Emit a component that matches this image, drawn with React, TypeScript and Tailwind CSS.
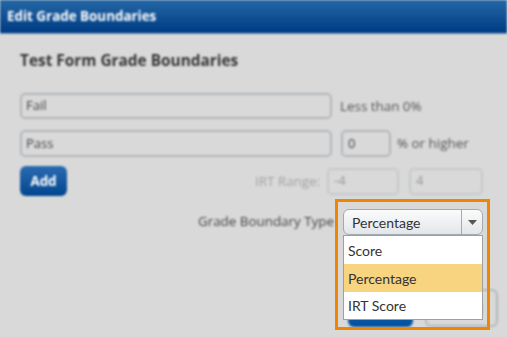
const lato = { fontFamily: "Lato, 'Open Sans', sans-serif" };
const openSans = { fontFamily: "'Open Sans', Lato, sans-serif" };

// Edit Grade Boundaries dialog with the boundary type dropdown opened.
export default function App() {
  return (
    <div className="relative h-[337px] w-[507px] overflow-hidden bg-[#d9d9d9]">
      <div className="blur-[0.8px]" style={openSans}>
        <div className="flex h-[34px] items-center border-b border-[#7d9cc6] bg-gradient-to-b from-[#2467a6] to-[#003b83] px-[7px]">
          <span className="text-[13.4px] font-bold text-white">Edit Grade Boundaries</span>
        </div>

        <div className="px-5 pt-[17px]">
          <h1 className="text-[15.4px] leading-[20px] font-bold text-[#363636]">Test Form Grade Boundaries</h1>

          <div className="mt-[22px] flex items-center">
            <div className="flex h-[26px] w-[312px] items-center rounded-[5px] border-2 border-[#b3b8bc] px-[4px] text-[13px] text-[#444]">Fail</div>
            <span className="ml-[8px] text-[13.4px] text-[#555]">Less than 0%</span>
          </div>

          <div className="mt-[11px] flex items-center">
            <div className="flex h-[27px] w-[312px] items-center rounded-[5px] border-2 border-[#b3b8bc] px-[4px] text-[13px] text-[#444]">Pass</div>
            <div className="ml-[9px] flex h-[27px] w-[50px] items-center rounded-[5px] border-2 border-[#b3b8bc] px-[5px] text-[13px] text-[#444]">0</div>
            <span className="ml-[6px] text-[13.4px] text-[#555]">% or higher</span>
          </div>

          <div className="mt-[9px] mr-[4px] flex items-center justify-between">
            <button className="h-[30px] w-[47px] rounded-[6px] bg-gradient-to-b from-[#2a6cb0] to-[#00458f] text-[13.4px] font-bold text-white">Add</button>
            <div className="flex items-center">
              <span className="mr-[7px] text-[13.4px] text-[#a3a3a3]">IRT Range:</span>
              <div className="flex h-[27px] w-[72px] items-center rounded-[5px] border-2 border-[#c6c9cc] px-[5px] text-[13px] text-[#999]">-4</div>
              <div className="ml-[10px] flex h-[27px] w-[74px] items-center rounded-[5px] border-2 border-[#c6c9cc] px-[5px] text-[13px] text-[#999]">4</div>
            </div>
          </div>

          <div className="mt-[12px] mr-[3px] flex items-center justify-end">
            <span className="mr-[10px] text-[13.4px] text-[#444]">Grade Boundary Type</span>
            <div className="h-[26px] w-[140px]" />
          </div>
        </div>

        <div className="mt-[55px] flex justify-end gap-[12px] pr-[9px]">
          <button className="h-[38px] w-[65px] rounded-[6px] bg-gradient-to-b from-[#2a6cb0] to-[#00509e] text-[14px] font-bold text-white">Save</button>
          <button className="h-[38px] w-[73px] rounded-[6px] border-2 border-[#b3b8bc] text-[14px] text-[#444]">Cancel</button>
        </div>
      </div>

      {/* highlighted dropdown */}
      <div className="absolute top-[199px] left-[335px] h-[131px] w-[155px] border-[3px] border-[#f08500] px-[5px] pt-[7px]" style={lato}>
        <div className="flex h-[26px] w-[140px] items-stretch rounded-[6px] border border-[#a2abb3] bg-gradient-to-b from-[#fbfbfb] to-[#e3e6e9]">
          <span className="flex flex-1 items-center pl-[8px] text-[14px] text-[#333]">Percentage</span>
          <span className="flex w-[21px] items-center justify-center border-l border-[#a2abb3]">
            <svg width="9" height="5" viewBox="0 0 9 5"><path d="M0 0h9L4.5 5z" fill="#555" /></svg>
          </span>
        </div>
        <div className="w-[140px] border border-[#a0a0a0] bg-white text-[14px] text-[#333]">
          <div className="flex h-[28px] items-center pl-[4px]">Score</div>
          <div className="flex h-[28px] items-center bg-[#f8d480] pl-[4px]">Percentage</div>
          <div className="flex h-[27px] items-center pl-[4px]">IRT Score</div>
        </div>
      </div>
    </div>
  );
}
